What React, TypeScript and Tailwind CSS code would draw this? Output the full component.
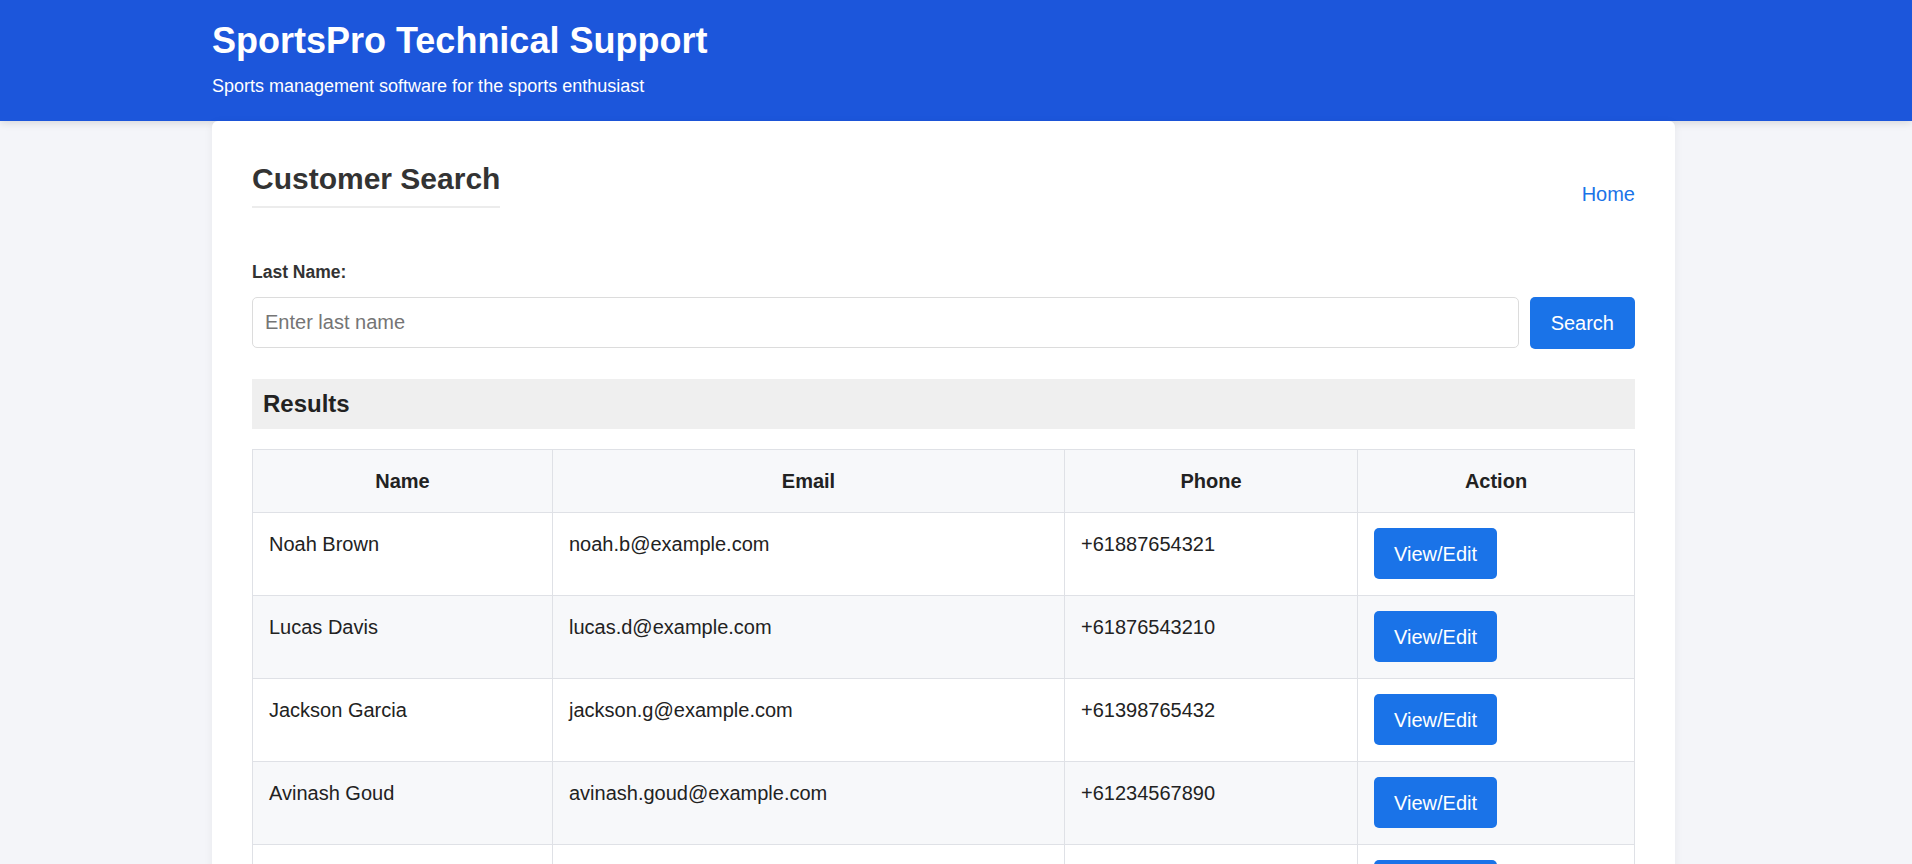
import React from 'react';

type Customer = {
	name: string;
	email: string;
	phone: string;
};

const customers: Customer[] = [
	{ name: 'Noah Brown', email: 'noah.b@example.com', phone: '+61887654321' },
	{ name: 'Lucas Davis', email: 'lucas.d@example.com', phone: '+61876543210' },
	{ name: 'Jackson Garcia', email: 'jackson.g@example.com', phone: '+61398765432' },
	{ name: 'Avinash Goud', email: 'avinash.goud@example.com', phone: '+61234567890' },
	{ name: 'Olivia Harris', email: 'olivia.h@example.com', phone: '+61412345678' },
];

const Header = () => (
	<header className="h-[121px] bg-[#1c56db] pt-[20px] text-white shadow-[0_2px_8px_rgba(0,0,0,0.12)]">
		<div className="ml-[212px]">
			<h1 className="m-0 text-[36px] font-bold leading-[41px]">
				SportsPro Technical Support
			</h1>
			<p className="mt-[15px] text-[18px] leading-[21px]">
				Sports management software for the sports enthusiast
			</p>
		</div>
	</header>
);

const ResultsTable = () => (
	<table className="mt-[20px] w-full table-fixed border-collapse text-[20px] leading-[30px] text-[#222]">
		<colgroup>
			<col className="w-[300px]" />
			<col className="w-[512px]" />
			<col className="w-[293px]" />
			<col />
		</colgroup>
		<thead>
			<tr className="bg-[#f7f8fa]">
				{['Name', 'Email', 'Phone', 'Action'].map((h) => (
					<th
						key={h}
						className="border border-[#dfe1e6] px-[16px] py-[16px] text-center font-bold"
					>
						{h}
					</th>
				))}
			</tr>
		</thead>
		<tbody>
			{customers.map((c, i) => (
				<tr key={c.email} className={i % 2 === 1 ? 'bg-[#f7f8fa]' : 'bg-white'}>
					<td className="border border-[#dfe1e6] px-[16px] pt-[16px] pb-[16px] align-top">
						{c.name}
					</td>
					<td className="border border-[#dfe1e6] px-[16px] pt-[16px] pb-[16px] align-top">
						{c.email}
					</td>
					<td className="border border-[#dfe1e6] px-[16px] pt-[16px] pb-[16px] align-top">
						{c.phone}
					</td>
					<td className="border border-[#dfe1e6] px-[16px] pt-[15px] pb-[16px] align-top">
						<button className="h-[51px] rounded-[5px] bg-[#1a73e8] px-[20px] text-[20px] text-white">
							View/Edit
						</button>
					</td>
				</tr>
			))}
		</tbody>
	</table>
);

export default function App() {
	return (
		<div className="min-h-screen bg-[#f4f5f9] pb-[40px] font-['Liberation_Sans',Arial,sans-serif]">
			<Header />
			<main className="ml-[212px] w-[1463px] rounded-[6px] bg-white px-[40px] pt-[40px] pb-[40px] shadow-[0_2px_10px_rgba(0,0,0,0.06)]">
				<div className="flex items-end justify-between">
					<h2 className="border-b-2 border-[#ececec] pb-[9px] text-[30px] font-bold leading-[36px] text-[#333]">
						Customer Search
					</h2>
					<a href="#" className="mb-[-1px] text-[20px] leading-[30px] text-[#1a73e8]">
						Home
					</a>
				</div>

				<form className="mt-[51px]" onSubmit={(e) => e.preventDefault()}>
					<label className="block text-[17.5px] font-bold leading-[26px] text-[#333]">
						Last Name:
					</label>
					<div className="mt-[12px] flex gap-[11px]">
						<input
							type="text"
							placeholder="Enter last name"
							className="h-[51px] flex-1 rounded-[5px] border border-[#dcdcdc] px-[12px] text-[20px] text-[#222] outline-none placeholder:text-[#757575]"
						/>
						<button
							type="submit"
							className="h-[52px] rounded-[5px] bg-[#1a73e8] px-[21px] text-[20px] text-white"
						>
							Search
						</button>
					</div>
				</form>

				<div className="mt-[30px] bg-[#efefef] px-[11px] py-[12px]">
					<h3 className="text-[24px] font-bold leading-[26px] text-[#222]">Results</h3>
				</div>

				<ResultsTable />
			</main>
		</div>
	);
}
